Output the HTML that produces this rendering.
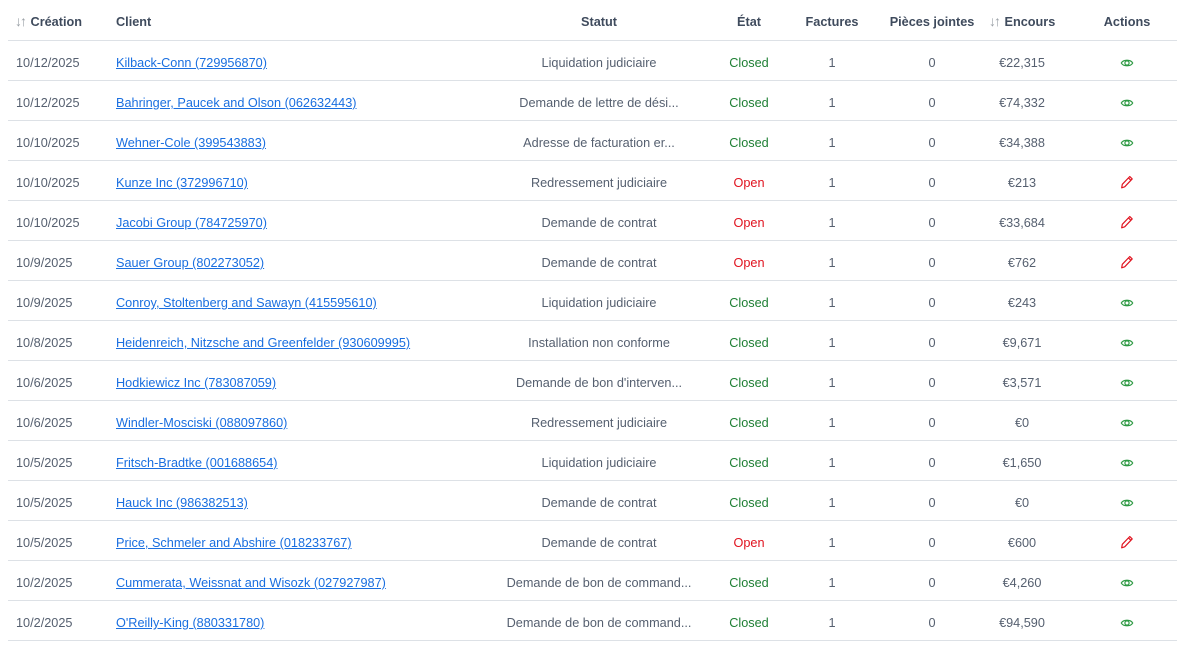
<!DOCTYPE html><html><head><meta charset="utf-8"><style>
body{margin:0;background:#fff;font-family:"Liberation Sans",sans-serif;font-size:12.7px;color:#566070;width:1190px;height:652px;overflow:hidden}
.r{position:absolute;left:8px;width:1169px;height:40px;border-bottom:1px solid #dde1e6}
.c{position:absolute;top:3px;line-height:40px;white-space:nowrap}
.h .c{top:2px}
.ct{transform:translateX(-50%)}
.h .c{font-weight:bold;color:#3f4b5d}
a{color:#1a6fe0;text-decoration:underline}
.g{color:#1e7f34}.o{color:#e0131f}
.s{color:#9aa0a6;font-weight:normal;font-size:14px;line-height:1;margin-right:2px;letter-spacing:-2px}
</style></head><body>
<div class="r h" style="top:0">
<div class="c" style="left:7px"><span class="s">↓↑</span> Création</div>
<div class="c" style="left:108px">Client</div>
<div class="c ct" style="left:591px">Statut</div>
<div class="c ct" style="left:741px">État</div>
<div class="c ct" style="left:824px">Factures</div>
<div class="c ct" style="left:924px">Pièces jointes</div>
<div class="c" style="left:981px"><span class="s">↓↑</span> Encours</div>
<div class="c ct" style="left:1119px">Actions</div>
</div>
<div id="b"></div>
<script>
var d=[["10/12/2025","Kilback-Conn (729956870)","Liquidation judiciaire",1,"€22,315"],
["10/12/2025","Bahringer, Paucek and Olson (062632443)","Demande de lettre de dési...",1,"€74,332"],
["10/10/2025","Wehner-Cole (399543883)","Adresse de facturation er...",1,"€34,388"],
["10/10/2025","Kunze Inc (372996710)","Redressement judiciaire",0,"€213"],
["10/10/2025","Jacobi Group (784725970)","Demande de contrat",0,"€33,684"],
["10/9/2025","Sauer Group (802273052)","Demande de contrat",0,"€762"],
["10/9/2025","Conroy, Stoltenberg and Sawayn (415595610)","Liquidation judiciaire",1,"€243"],
["10/8/2025","Heidenreich, Nitzsche and Greenfelder (930609995)","Installation non conforme",1,"€9,671"],
["10/6/2025","Hodkiewicz Inc (783087059)","Demande de bon d'interven...",1,"€3,571"],
["10/6/2025","Windler-Mosciski (088097860)","Redressement judiciaire",1,"€0"],
["10/5/2025","Fritsch-Bradtke (001688654)","Liquidation judiciaire",1,"€1,650"],
["10/5/2025","Hauck Inc (986382513)","Demande de contrat",1,"€0"],
["10/5/2025","Price, Schmeler and Abshire (018233767)","Demande de contrat",0,"€600"],
["10/2/2025","Cummerata, Weissnat and Wisozk (027927987)","Demande de bon de command...",1,"€4,260"],
["10/2/2025","O'Reilly-King (880331780)","Demande de bon de command...",1,"€94,590"]];
var eye='<svg width="13" height="10" viewBox="0 0 13 10" style="margin-top:15px"><path d="M0.8 5C2.8 1.3 10.2 1.3 12.2 5C10.2 8.7 2.8 8.7 0.8 5Z" fill="none" stroke="#2e9a44" stroke-width="1.2"/><circle cx="6.5" cy="5" r="2.1" fill="none" stroke="#2e9a44" stroke-width="1.2"/></svg>';
var pen='<svg width="13" height="14" viewBox="0 0 13 14" style="margin-top:12px"><path d="M1.2 12.8L1.8 9.3L9.3 1.5L11.7 3.9L4.2 11.8Z M8 2.9L10.4 5.3" fill="none" stroke="#e0131f" stroke-width="1.2" stroke-linejoin="round"/></svg>';
var h='';d.forEach(function(r,i){h+='<div class="r" style="top:'+(40*(i+1))+'px">'+
'<div class="c" style="left:8px">'+r[0]+'</div>'+
'<div class="c" style="left:108px"><a>'+r[1]+'</a></div>'+
'<div class="c ct" style="left:591px">'+r[2]+'</div>'+
'<div class="c ct '+(r[3]?'g':'o')+'" style="left:741px">'+(r[3]?'Closed':'Open')+'</div>'+
'<div class="c ct" style="left:824px">1</div>'+
'<div class="c ct" style="left:924px">0</div>'+
'<div class="c ct" style="left:1014px">'+r[4]+'</div>'+
'<div class="c ct" style="left:1119px;line-height:0">'+(r[3]?eye:pen)+'</div></div>';});
document.getElementById('b').innerHTML=h;
</script>
</body></html>
